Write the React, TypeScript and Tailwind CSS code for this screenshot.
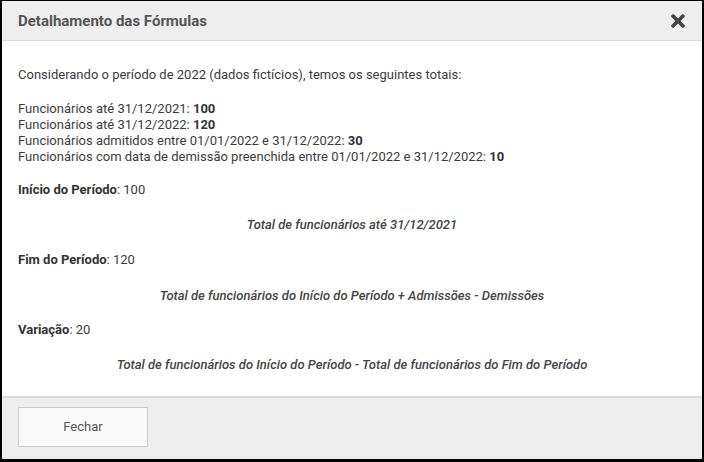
import React from 'react';
import { FaTimes } from 'react-icons/fa';

const totals = [
  { label: 'Funcionários até 31/12/2021: ', value: '100' },
  { label: 'Funcionários até 31/12/2022: ', value: '120' },
  { label: 'Funcionários admitidos entre 01/01/2022 e 31/12/2022: ', value: '30' },
  { label: 'Funcionários com data de demissão preenchida entre 01/01/2022 e 31/12/2022: ', value: '10' },
];

const App: React.FC = () => {
  return (
    <div
      className="w-[704px] h-[462px] flex flex-col bg-black border-l-2 border-r-2 border-t border-b-[3px] border-black text-[13px] leading-4 text-[#3c3c3c]"
      style={{ fontFamily: 'Roboto, "Liberation Sans", sans-serif' }}
    >
      {/* header */}
      <div className="h-[40px] flex items-center justify-between pl-4 pr-[14px] bg-[#eeeeee] border-b border-[#dcdcdc]">
        <h2 className="text-[15px] font-bold text-[#555555]">Detalhamento das Fórmulas</h2>
        <button className="text-[#444444]">
          <FaTimes size={20} />
        </button>
      </div>

      {/* body */}
      <div className="flex-1 bg-white pl-4 pr-4 pt-[26px]">
        <p>Considerando o período de 2022 (dados fictícios), temos os seguintes totais:</p>

        <div className="mt-[18px]">
          {totals.map((t) => (
            <p key={t.label}>
              {t.label}
              <b className="text-[#333333]">{t.value}</b>
            </p>
          ))}
        </div>

        <p className="mt-[17px]">
          <b className="text-[#333333]">Início do Período</b>: 100
        </p>
        <p className="mt-[19px] text-center italic font-medium text-[#444444]">Total de funcionários até 31/12/2021</p>

        <p className="mt-[19px]">
          <b className="text-[#333333]">Fim do Período</b>: 120
        </p>
        <p className="mt-[20px] text-center italic font-medium text-[#444444]">
          Total de funcionários do Início do Período + Admissões - Demissões
        </p>

        <p className="mt-[18px]">
          <b className="text-[#333333]">Variação</b>: 20
        </p>
        <p className="mt-[19px] text-center italic font-medium text-[#444444]">
          Total de funcionários do Início do Período - Total de funcionários do Fim do Período
        </p>
      </div>

      {/* footer */}
      <div className="h-[63px] bg-[#eeeeee] border-t-2 border-[#dddddd] pl-4 pt-[9px]">
        <button className="w-[130px] h-[40px] bg-[#fafafa] border border-[#cccccc] text-[13px] text-[#555555]">
          Fechar
        </button>
      </div>
    </div>
  );
};

export default App;
